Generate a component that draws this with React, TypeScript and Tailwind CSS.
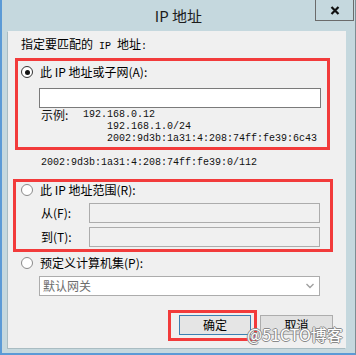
import React from 'react';

const cjk = "font-['Noto_Sans_CJK_SC','Liberation_Sans',sans-serif]";
const mono = "font-['Liberation_Mono',monospace]";

function Radio({ checked }: { checked?: boolean }) {
    return (
        <span
            className={
                checked
                    ? 'w-[12px] h-[12px] rounded-full border border-[#333333] bg-white flex items-center justify-center shrink-0'
                    : 'w-[12px] h-[12px] rounded-full border border-[#8a8a8a] bg-white flex items-center justify-center shrink-0'
            }
        >
            {checked && <span className="w-[5px] h-[5px] rounded-full bg-[#111111]" />}
        </span>
    );
}

const App: React.FC = () => {
    return (
        <div className={`${cjk} relative w-[356px] h-[355px] bg-[#c5d8de] flex flex-col border-l-2 border-b-2 border-[#5b9ad6] border-r border-r-[#7d8d93] text-black`}>
            {/* Title bar */}
            <div className="relative h-[31px] flex items-center justify-center">
                <span className="text-[15px] leading-[20px] text-[#1c1c1c]">IP 地址</span>
                <div className="absolute right-[1px] top-[-1px] w-[39px] h-[22px] border border-[#6b6b6b] flex items-center justify-center">
                    <svg width="10" height="9" viewBox="0 0 10 9">
                        <path d="M1.5 1 L8.5 8 M8.5 1 L1.5 8" stroke="#111" strokeWidth="2.2" />
                    </svg>
                </div>
            </div>

            {/* Panel */}
            <div className="ml-[6px] w-[338px] h-[317px] bg-[#f0f0f0] shadow-[-1px_1px_0_#a9bcc2] flex flex-col text-[12px]">
                <div className="mt-[5px] ml-[13px] h-[16px] leading-[16px]">
                    指定要匹配的<span className={`${mono} text-[10px]`}> IP </span>地址<span className={`${mono} text-[10px]`}>:</span>
                </div>

                {/* Single address */}
                <div className="mt-[6px] ml-[7px] w-[315px] h-[92px] border-[3px] border-[#f23b3b] flex flex-col">
                    <div className="mt-[3px] ml-[3px] h-[16px] flex items-center gap-[7px]">
                        <Radio checked />
                        <span className="leading-[16px]">此 IP 地址或子网(A):</span>
                    </div>
                    <div className="mt-[8px] ml-[21px] w-[282px] h-[20px] border border-[#7a7a7a] bg-white" />
                    <div className={`mt-[1px] ml-[23px] ${mono} text-[10px] leading-[12px] text-[#111]`}>
                        <div className="flex h-[12px]">
                            <span className={`${cjk} w-[42px] text-[12px] leading-[12px]`}>示例:</span>
                            <span>192.168.0.12</span>
                        </div>
                        <div className="h-[12px] pl-[66px]">192.168.1.0/24</div>
                        <div className="h-[12px] pl-[66px]">2002:9d3b:1a31:4:208:74ff:fe39:6c43</div>
                    </div>
                </div>

                <div className={`mt-[5px] ml-[33px] h-[16px] leading-[16px] ${mono} text-[10px] text-[#111]`}>
                    2002:9d3b:1a31:4:208:74ff:fe39:0/112
                </div>

                {/* Range */}
                <div className="mt-[8px] ml-[5px] w-[320px] h-[73px] border-[3px] border-[#f23b3b] flex flex-col">
                    <div className="ml-[5px] h-[16px] flex items-center gap-[7px]">
                        <Radio />
                        <span className="leading-[16px]">此 IP 地址范围(R):</span>
                    </div>
                    <div className="mt-[5px] h-[20px] flex items-center">
                        <span className="ml-[25px] w-[48px] leading-[16px]">从(F):</span>
                        <div className="w-[231px] h-[20px] border border-[#acacac]" />
                    </div>
                    <div className="mt-[4px] h-[20px] flex items-center">
                        <span className="ml-[25px] w-[48px] leading-[16px]">到(T):</span>
                        <div className="w-[231px] h-[20px] border border-[#acacac]" />
                    </div>
                </div>

                {/* Predefined */}
                <div className="mt-[3px] ml-[13px] h-[16px] flex items-center gap-[7px]">
                    <Radio />
                    <span className="leading-[16px]">预定义计算机集(P):</span>
                </div>
                <div className="mt-[5px] ml-[31px] w-[281px] h-[20px] border border-[#acacac] bg-white flex items-center justify-between pl-[3px] pr-[5px] text-[#6d6d6d]">
                    <span className="leading-[16px]">默认网关</span>
                    <svg width="8" height="6" viewBox="0 0 8 6">
                        <path d="M0.5 1 L4 4.5 L7.5 1" stroke="#a0a0a0" strokeWidth="1.4" fill="none" />
                    </svg>
                </div>

                {/* Buttons */}
                <div className="mt-[14px] flex items-start">
                    <div className="ml-[160px] w-[89px] h-[31px] border-[3px] border-[#f23b3b] pl-[8px] pt-[2px]">
                        <button className="w-[72px] h-[20px] border border-[#3c7fb1] bg-[#e5e5e5] text-[12px] leading-[16px] flex items-center justify-center">
                            确定
                        </button>
                    </div>
                    <button className="ml-[3px] mt-[5px] w-[73px] h-[20px] border border-[#adadad] bg-[#e1e1e1] text-[12px] leading-[16px] flex items-center justify-center">
                        取消
                    </button>
                </div>
            </div>

            {/* Watermark */}
            <div className="absolute left-[245px] top-[324px] text-[16px] leading-[20px] text-white [text-shadow:1px_0_0_#8a8a8a,-1px_0_0_#8a8a8a,0_1px_0_#8a8a8a,0_-1px_0_#8a8a8a]">
                @51CTO博客
            </div>
        </div>
    );
};

export default App;
